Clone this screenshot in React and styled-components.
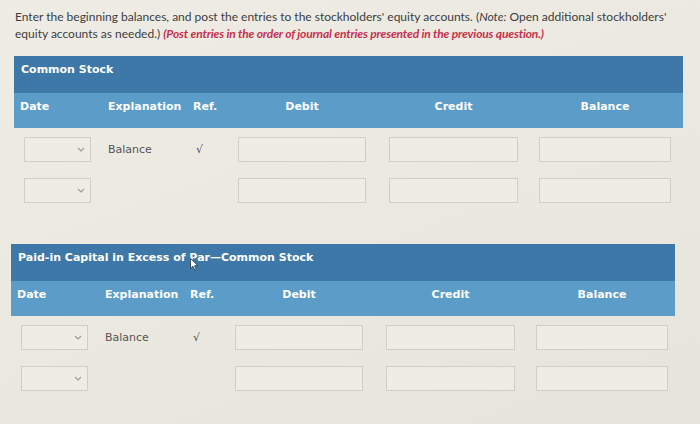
import React from "react";
import styled, { createGlobalStyle } from "styled-components";

const Global = createGlobalStyle`
  html, body { margin: 0; padding: 0; }
  body {
    background: linear-gradient(160deg, #efece5 0%, #ebe8e0 55%, #e7e4dc 100%);
    width: 700px;
    height: 424px;
    overflow: hidden;
    font-family: "DejaVu Sans", Verdana, sans-serif;
  }
`;

const Page = styled.div`
  position: relative;
  padding: 8px 0 0 0;
`;

const Intro = styled.p`
  margin: 0 0 0 15px;
  width: 680px;
  font-family: Lato, "Open Sans", sans-serif;
  font-size: 12px;
  line-height: 17px;
  color: #3d3d3d;
`;

const Em = styled.span`
  font-style: italic;
`;

const Red = styled.span`
  color: #c8304c;
  font-weight: bold;
  font-style: italic;
  letter-spacing: -0.15px;
`;

const Table = styled.section`
  position: relative;
  margin-left: ${(p) => p.$left}px;
  margin-top: ${(p) => p.$top}px;
  width: ${(p) => p.$width}px;
`;

const TitleBar = styled.div`
  height: 37px;
  box-sizing: border-box;
  padding: 7px 0 0 7px;
  background: #3d78a9;
  color: #fff;
  font-weight: bold;
  font-size: 11px;
  line-height: 13px;
`;

const Grid = styled.div`
  display: grid;
  grid-template-columns: 94px 85px 45px 128px 23px 129px 21px 132px;
`;

const HeadRow = styled(Grid)`
  height: 35px;
  box-sizing: border-box;
  padding-top: 7px;
  align-items: start;
  background: #5b9cc8;
  color: #fff;
  font-weight: bold;
  font-size: 11px;
  line-height: 13px;
`;

const HeadCell = styled.div`
  grid-column: ${(p) => p.$col};
  text-align: ${(p) => (p.$center ? "center" : "left")};
  padding-left: ${(p) => p.$pad || 0}px;
`;

const BodyRow = styled(Grid)`
  height: 41px;
  align-items: center;
  padding-top: ${(p) => (p.$first ? 1 : 0)}px;
`;

const Select = styled.div`
  grid-column: 1;
  margin-left: 10px;
  width: 67px;
  height: 25px;
  box-sizing: border-box;
  border: 1px solid #d3cec5;
  background: #efece5;
  display: flex;
  align-items: center;
  justify-content: flex-end;
  padding-right: 5px;
`;

const Text = styled.div`
  grid-column: ${(p) => p.$col};
  color: #555;
  font-size: 11px;
  padding-left: ${(p) => p.$pad || 0}px;
`;

const Input = styled.div`
  grid-column: ${(p) => p.$col};
  height: 25px;
  box-sizing: border-box;
  border: 1px solid #d3cec5;
  background: #efece5;
`;

const Cursor = styled.svg`
  position: absolute;
  left: 179px;
  top: 14px;
  pointer-events: none;
`;

function Chevron() {
  return (
    <svg width="8" height="5" viewBox="0 0 8 5">
      <path d="M1 1 L4 4 L7 1" fill="none" stroke="#9a9a9a" strokeWidth="1.1" />
    </svg>
  );
}

function Ledger({ title, left, top, width, cursor }) {
  return (
    <Table $left={left} $top={top} $width={width}>
      <TitleBar>{title}</TitleBar>
      {cursor && (
        <Cursor width="9" height="13" viewBox="0 0 9 13">
          <path d="M0.5 0.5 L0.5 10.5 L3 8.3 L4.8 12.3 L6.3 11.6 L4.6 7.7 L8 7.7 Z" fill="#fff" stroke="#2a3f55" strokeWidth="0.9" />
        </Cursor>
      )}
      <HeadRow>
        <HeadCell $col={1} $pad={6}>Date</HeadCell>
        <HeadCell $col={2}>Explanation</HeadCell>
        <HeadCell $col={3}>Ref.</HeadCell>
        <HeadCell $col={4} $center>Debit</HeadCell>
        <HeadCell $col={6} $center>Credit</HeadCell>
        <HeadCell $col={8} $center>Balance</HeadCell>
      </HeadRow>
      <BodyRow $first>
        <Select><Chevron /></Select>
        <Text $col={2}>Balance</Text>
        <Text $col={3} $pad={3}>√</Text>
        <Input $col={4} />
        <Input $col={6} />
        <Input $col={8} />
      </BodyRow>
      <BodyRow>
        <Select><Chevron /></Select>
        <Input $col={4} />
        <Input $col={6} />
        <Input $col={8} />
      </BodyRow>
    </Table>
  );
}

export default function App() {
  return (
    <Page>
      <Global />
      <Intro>
        Enter the beginning balances, and post the entries to the stockholders' equity accounts. (<Em>Note:</Em> Open additional stockholders'
        equity accounts as needed.) <Red>(Post entries in the order of journal entries presented in the previous question.)</Red>
      </Intro>
      <Ledger title="Common Stock" left={14} top={14} width={669} />
      <Ledger title="Paid-in Capital in Excess of Par—Common Stock" left={11} top={33} width={664} cursor />
    </Page>
  );
}
